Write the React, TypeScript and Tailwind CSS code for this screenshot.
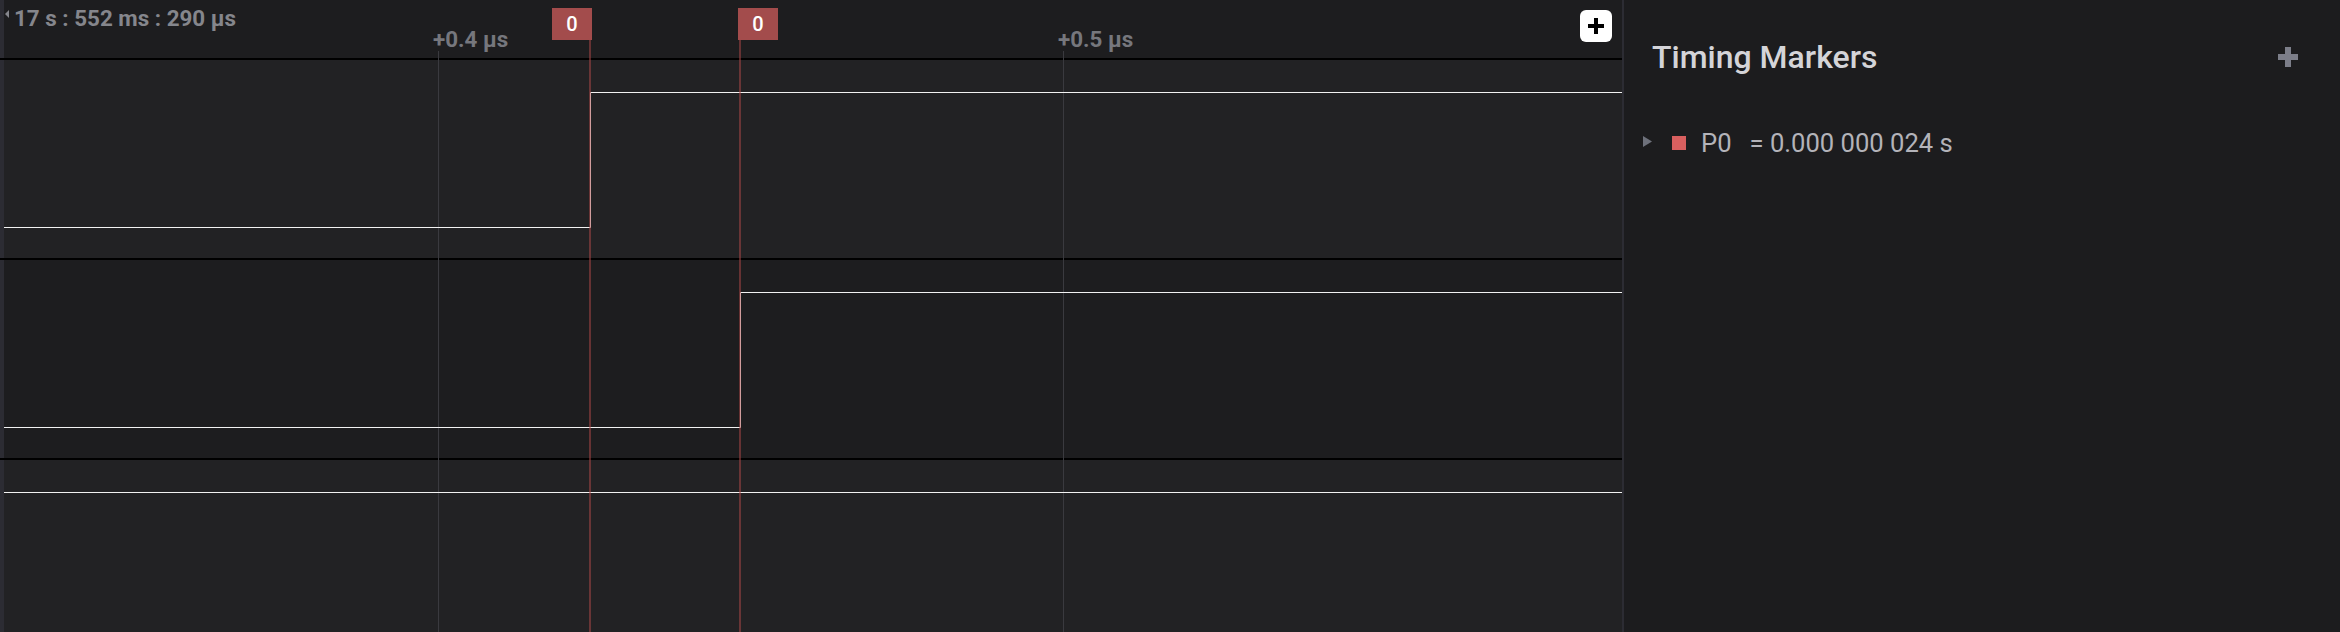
import React from 'react'

type Tick = {
  x: number
  label: string
}

type Marker = {
  line: number
  box: number
  label: string
}

type Signal = {
  edge: number | null
  rowClass: string
}

const ticks: Tick[] = [
  { x: 438, label: '+0.4 µs' },
  { x: 1063, label: '+0.5 µs' },
]

const markers: Marker[] = [
  { line: 589, box: 552, label: '0' },
  { line: 739, box: 738, label: '0' },
]

// edge = x of the rising edge inside the trace area (null = flat high)
const signals: Signal[] = [
  { edge: 586, rowClass: 'h-[200px] shrink-0 bg-[#222224]' },
  { edge: 736, rowClass: 'h-[200px] shrink-0 bg-[#1d1d1f]' },
  { edge: null, rowClass: 'min-h-0 flex-1 bg-[#222224]' },
]

function Trace({ edge }: { edge: number | null }) {
  const d =
    edge === null
      ? 'M0 32.5 H1618'
      : `M0 167.5 H${edge + 0.5} V32.5 H1618`
  return (
    <svg className="relative z-20 h-[198px] w-[1618px] shrink-0" width="1618" height="198">
      <path d={d} fill="none" stroke="#f2f2f2" strokeWidth="1" />
    </svg>
  )
}

function Waveforms() {
  return (
    <div className="relative flex h-full w-[1622px] shrink-0 flex-col overflow-hidden">
      {/* header / time ruler */}
      <div className="relative flex h-[58px] shrink-0 bg-[#1d1d1f]">
        <div className="w-1 bg-[#2c2c33]" />
        <div className="flex items-start gap-[5px] pt-[7px] pl-px">
          <svg width="4" height="8" className="mt-[3px]">
            <polygon points="4,0 4,8 0,4" fill="#85868c" />
          </svg>
          <span className="text-[22.4px] leading-[22px] font-bold text-[#85868c]">
            17 s : 552 ms : 290 µs
          </span>
        </div>
        <button className="z-40 mt-[10px] mr-[10px] ml-auto flex h-8 w-8 items-center justify-center self-start rounded-[6px] bg-white">
          <svg width="16" height="16" viewBox="0 0 16 16">
            <rect x="0" y="6" width="16" height="4" fill="#000" />
            <rect x="6" y="0" width="4" height="16" fill="#000" />
          </svg>
        </button>
        {ticks.map((t) => (
          <span
            key={t.label}
            className="absolute top-[28px] text-[22.4px] leading-[22px] font-bold text-[#76777d]"
            style={{ left: t.x - 5 }}
          >
            {t.label}
          </span>
        ))}
        {markers.map((m, i) => (
          <div
            key={i}
            className="absolute top-2 z-40 flex h-8 w-10 items-center justify-center bg-[#a34c4c] text-[20px] font-medium text-white"
            style={{ left: m.box }}
          >
            {m.label}
          </div>
        ))}
      </div>

      {/* signal rows */}
      {signals.map((s, i) => (
        <div key={i} className={`flex overflow-hidden border-t-2 border-black ${s.rowClass}`}>
          <div className="w-1 shrink-0 bg-[#2c2c33]" />
          <Trace edge={s.edge} />
        </div>
      ))}

      {/* grid ticks */}
      {ticks.map((t) => (
        <div
          key={t.label}
          className="absolute top-[51px] bottom-0 z-10 w-px bg-[#3a3a3f]"
          style={{ left: t.x }}
        />
      ))}

      {/* marker lines */}
      {markers.map((m, i) => (
        <div
          key={i}
          className="absolute top-10 bottom-0 z-30 w-[2px] bg-[#b04848]/50"
          style={{ left: m.line }}
        />
      ))}
    </div>
  )
}

function MarkersPanel() {
  return (
    <aside className="flex-1 bg-[#1c1c1e] pt-[37px] pr-[42px] pl-[19px]">
      <div className="flex h-10 items-center justify-between">
        <h2 className="ml-[9px] text-[32px] leading-10 font-medium text-[#d4d4d8]">
          Timing Markers
        </h2>
        <svg width="20" height="20" viewBox="0 0 20 20">
          <rect x="0" y="7" width="20" height="6" fill="#7c7e89" />
          <rect x="7" y="0" width="6" height="20" fill="#7c7e89" />
        </svg>
      </div>
      <ul className="mt-[46px]">
        <li className="flex h-10 items-center text-[25.6px] leading-10 text-[#b3b3b9]">
          <svg width="9" height="11" className="-mt-[3px]">
            <polygon points="0,0 9,5.5 0,11" fill="#6e717b" />
          </svg>
          <span className="ml-5 h-[14px] w-[14px] bg-[#d85f5f]" />
          <span className="ml-[15px]">P0</span>
          <span className="ml-[18px]">= 0.000 000 024 s</span>
        </li>
      </ul>
    </aside>
  )
}

export default function App() {
  return (
    <div className="flex h-[632px] w-[2340px] overflow-hidden bg-[#1c1c1e] [font-family:Roboto,sans-serif]">
      <Waveforms />
      <div className="w-[2px] shrink-0 bg-[#2c2c33]" />
      <MarkersPanel />
    </div>
  )
}
